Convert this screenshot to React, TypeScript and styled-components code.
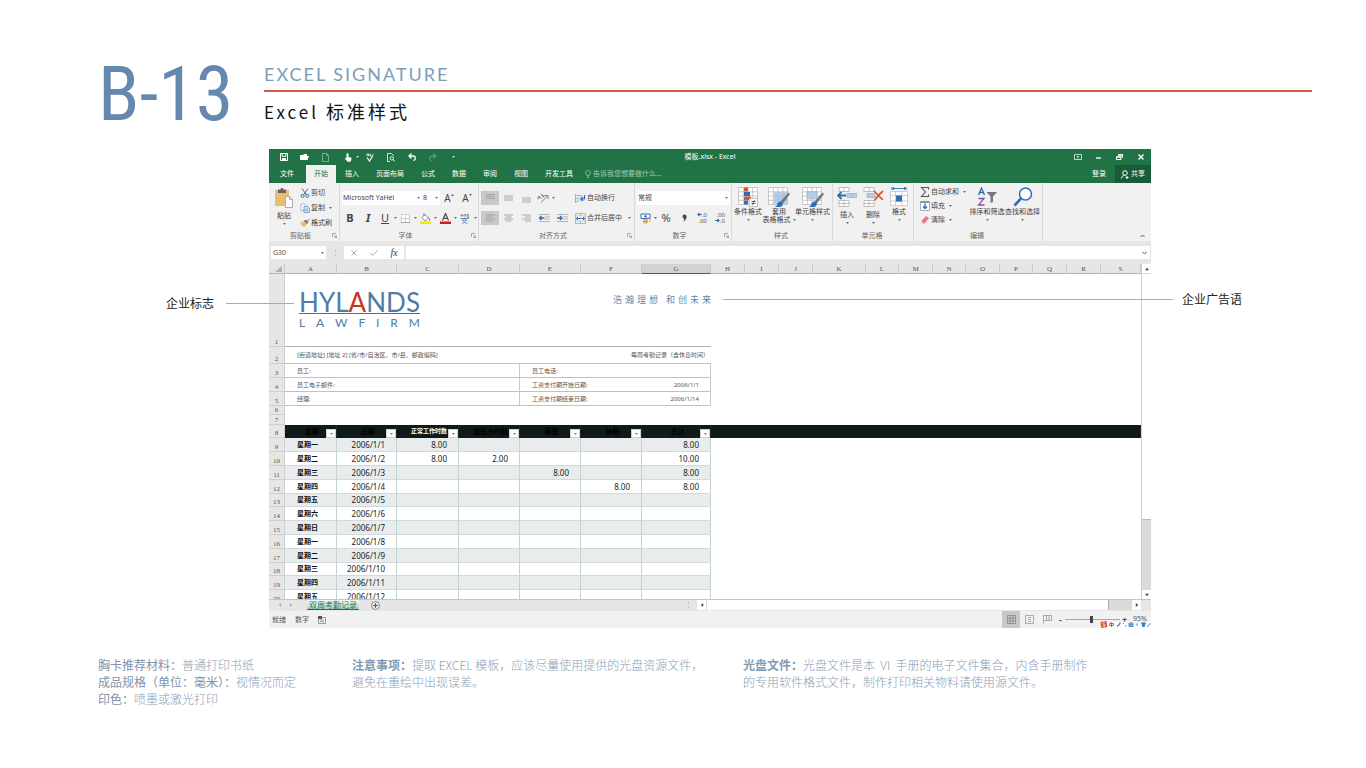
import React from "react";
import styled, { createGlobalStyle, css } from "styled-components";

const sans = `"Noto Sans", "Noto Sans CJK SC", sans-serif`;
const cjk = `"Noto Sans CJK SC", "Noto Sans", sans-serif`;
const blue = "#6488ae";
const green = "#217346";

const Global = createGlobalStyle`
  *, *::before, *::after { box-sizing: border-box; }
  body { margin: 0; background: #fff; font-family: ${sans}; }
  button, input, select { font: inherit; color: inherit; border: 0; padding: 0; margin: 0; background: none; border-radius: 0; }
  svg { display: block; flex: none; }
`;

/* ---------- page ---------- */
const Page = styled.main`
  min-width: 1240px;
  padding: 57px 54px 60px 98px;
`;
const Header = styled.header`
  display: grid;
  grid-template-columns: 166px 1fr;
  height: 92px;
`;
const Code = styled.div`
  font: 400 76px/74px "Roboto Condensed", "Roboto", sans-serif;
  color: ${blue};
  white-space: nowrap;
`;
const English = styled.p`
  margin: 0;
  height: 33px;
  font: 400 18px/34px "Lato", sans-serif;
  letter-spacing: 2px;
  color: #7d9cbd;
  white-space: nowrap;
`;
const Title = styled.h1`
  margin: 0;
  border-top: 2px solid #cf5b42;
  font: 400 17px/38px ${cjk};
  letter-spacing: 3px;
  color: #111;
  & > span { font-size: 18px; }
`;
const Figure = styled.section`
  position: relative;
  margin: 0 161px 0 171px;
`;
const Callout = styled.div<{ $side: "left" | "right" }>`
  position: absolute;
  display: flex;
  align-items: center;
  font: 400 12px/16px ${cjk};
  color: #222;
  white-space: nowrap;
  pointer-events: none;
  ${(p) =>
    p.$side === "left"
      ? css`left: -103px; top: 146px; gap: 12px; width: 128px;`
      : css`left: 454px; right: -91px; top: 142px; gap: 9px;`}
`;
const Leader = styled.span`
  flex: 1;
  height: 1px;
  background: #d3a070;
`;
const Notes = styled.footer`
  display: grid;
  grid-template-columns: 254px 391px 1fr;
  margin-top: 28px;
  font: 300 12px/17px ${cjk};
  color: #8b9eb6;
  white-space: nowrap;
`;
const Note = styled.p`
  margin: 0;
`;
const Label = styled.span`
  font-weight: 400;
  color: #7e93ad;
`;
const Strong = styled.strong`
  font-weight: 700;
  color: #8499b2;
`;

/* ---------- application window ---------- */
const Window = styled.div`
  background: #e6e6e6;
  color: #444;
  font: 400 7px/10px ${sans};
  overflow: hidden;
`;
const TitleBar = styled.div`
  display: grid;
  grid-template-columns: 1fr auto 1fr;
  align-items: center;
  height: 16px;
  background: ${green};
  color: #fff;
`;
const Quick = styled.div<{ $end?: boolean }>`
  display: flex;
  padding-left: 4px;
  justify-content: ${(p) => (p.$end ? "flex-end" : "flex-start")};
`;
const BarButton = styled.button<{ $caret?: boolean; $dim?: boolean }>`
  display: flex;
  align-items: center;
  justify-content: ${(p) => (p.$caret ? "flex-end" : "center")};
  gap: 4px;
  width: ${(p) => (p.$caret ? 23 : 21)}px;
  height: 14px;
  opacity: ${(p) => (p.$dim ? 0.4 : 1)};
`;
const TabBar = styled.nav`
  display: flex;
  align-items: stretch;
  gap: 1px;
  height: 18px;
  padding-left: 3px;
  background: ${green};
  color: #fff;
`;
const Tab = styled.button<{ $active?: boolean; $file?: boolean }>`
  padding: 0 8px;
  margin-right: ${(p) => (p.$file ? 3 : 0)}px;
  white-space: nowrap;
  ${(p) => p.$active && css`background: #f1f1f1; color: ${green};`}
`;
const Tell = styled.button`
  display: flex;
  align-items: center;
  gap: 2px;
  padding-left: 3px;
  color: #a6cab5;
  white-space: nowrap;
`;
const Spring = styled.span`
  flex: 1;
`;
const Share = styled.button`
  display: flex;
  align-items: center;
  justify-content: center;
  gap: 2px;
  width: 36px;
  background: #185c37;
`;
const Ribbon = styled.div`
  display: flex;
  height: 58px;
  background: #f1f1f1;
`;
const Group = styled.section<{ $w?: number }>`
  display: flex;
  flex-direction: column;
  ${(p) => (p.$w ? css`width: ${p.$w}px; border-right: 1px solid #dadada;` : css`flex: 1;`)}
`;
const GroupBody = styled.div<{ $pad?: number }>`
  display: flex;
  flex: 1;
  padding-left: ${(p) => p.$pad ?? 0}px;
`;
const GroupFoot = styled.div`
  display: flex;
  align-items: center;
  height: 11px;
  padding-right: 2px;
  color: #666;
  text-align: center;
  & > span { flex: 1; }
`;
const BigButton = styled.button<{ $w: number; $low?: boolean }>`
  display: flex;
  flex-direction: column;
  align-items: center;
  width: ${(p) => p.$w}px;
  padding-top: 4px;
  line-height: 8px;
  white-space: nowrap;
  & > svg:first-child { margin-bottom: ${(p) => (p.$low ? 4 : 1)}px; }
  & > svg:last-child { margin-top: 3px; }
`;
const Pair = styled.span`
  display: flex;
  align-items: center;
  gap: 2px;
`;
const Stack = styled.div<{ $w?: number; $pad: number }>`
  display: flex;
  flex-direction: column;
  width: ${(p) => (p.$w ? p.$w + "px" : "auto")};
  padding: ${(p) => p.$pad}px 0 0 6px;
`;
const SmallButton = styled.button<{ $h: number }>`
  display: flex;
  align-items: center;
  gap: 1px;
  height: ${(p) => p.$h}px;
  white-space: nowrap;
  & > svg + svg, & > span + svg { margin-left: 3px; }
`;
const Rows = styled.div`
  display: flex;
  flex-direction: column;
  gap: 6px;
  flex: 1;
  padding-top: 8px;
`;
const Row = styled.div<{ $pad?: number }>`
  display: flex;
  align-items: center;
  height: 14px;
  padding-left: ${(p) => p.$pad ?? 0}px;
`;
const Tool = styled.button<{ $on?: boolean }>`
  display: flex;
  align-items: center;
  justify-content: center;
  width: 18px;
  height: 14px;
  background: ${(p) => (p.$on ? "#c8c8c8" : "none")};
`;
const DropTool = styled.button`
  display: grid;
  grid-template-columns: 16px 4px;
  place-items: center;
  width: 20px;
  height: 14px;
`;
const TextTool = styled.button<{ $gap: number }>`
  display: flex;
  align-items: center;
  gap: 1px;
  margin-left: ${(p) => p.$gap}px;
  white-space: nowrap;
  & > span + svg { margin-left: 5px; }
`;
const Letter = styled.span<{ $style: "b" | "i" | "u" | "a" | "p" }>`
  font: 700 11px/12px ${sans};
  ${(p) => p.$style === "i" && css`font-style: italic;`}
  ${(p) => p.$style === "u" && css`font-weight: 400; text-decoration: underline;`}
  ${(p) => p.$style === "a" && css`font-weight: 400; font-size: 10px;`}
  ${(p) => p.$style === "p" && css`font-weight: 400; font-size: 11px;`}
`;
const Picker = styled.label<{ $w: number }>`
  display: flex;
  align-items: center;
  width: ${(p) => p.$w}px;
  height: 14px;
  padding-right: 2px;
  background: #fff;
  font-size: 7px;
`;
const Select = styled.select`
  flex: 1;
  min-width: 0;
  height: 12px;
  padding-left: 1px;
  appearance: none;
  line-height: 12px;
`;
const FormulaBar = styled.div`
  display: flex;
  align-items: center;
  height: 23px;
  padding: 0 1px 0 2px;
`;
const NameBox = styled.label`
  display: flex;
  align-items: center;
  width: 55px;
  height: 13px;
  padding: 0 2px;
  background: #fff;
`;
const Field = styled.input`
  flex: 1;
  min-width: 0;
  height: 13px;
  font-size: 7px;
  color: #555;
`;
const Dots = styled.span`
  width: 18px;
  text-align: center;
  color: #999;
`;
const FormulaTools = styled.div`
  display: flex;
  width: 60px;
  height: 13px;
  margin-right: 2px;
  background: #fff;
`;
const FormulaTool = styled.button`
  display: grid;
  place-items: center;
  width: 20px;
`;
const Fx = styled.span`
  font: italic 400 10px/12px "Liberation Serif", serif;
`;
const FormulaField = styled.label`
  display: flex;
  align-items: center;
  flex: 1;
  height: 13px;
  padding-right: 3px;
  background: #fff;
`;

/* ---------- worksheet ---------- */
const SheetArea = styled.div`
  display: flex;
  height: 335px;
`;
const Sheet = styled.div`
  flex: 1;
  min-width: 0;
  overflow: hidden;
  background: #fff;
`;
const Grid = styled.table`
  width: 100%;
  table-layout: fixed;
  border-collapse: separate;
  border-spacing: 0;
  td, th { padding: 0; font-weight: 400; line-height: 8px; white-space: nowrap; }
`;
const ColHead = styled.th<{ $on?: boolean }>`
  height: 10px;
  font-family: "Liberation Serif", serif;
  color: ${(p) => (p.$on ? green : "#555")};
  background: ${(p) => (p.$on ? "#d2d2d2" : "#e6e6e6")};
  border-right: 1px solid #c9c9c9;
  border-bottom: 1px solid ${(p) => (p.$on ? green : "#b5b5b5")};
`;
const RowHead = styled.th`
  vertical-align: bottom;
  font-family: "Liberation Serif", serif;
  color: #555;
  background: #e6e6e6;
  border-right: 1px solid #cfcfcf;
  border-bottom: 1px solid #cfcfcf;
  overflow: hidden;
`;
const SheetRow = styled.tr<{ $h: number }>`
  height: ${(p) => p.$h}px;
`;
const Info = styled.td<{ $right?: boolean; $pad?: number; $edge?: boolean }>`
  && {
    font-size: 6px;
    color: #5d524b;
    text-align: ${(p) => (p.$right ? "right" : "left")};
    padding: 0 ${(p) => (p.$right ? p.$pad ?? 11 : 0)}px 0 ${(p) => (p.$right ? 0 : p.$pad ?? 12)}px;
    border-bottom: 1px solid #c6c0bc;
    border-right: ${(p) => (p.$edge ? "1px solid #cbc8c5" : 0)};
  }
`;
const Banner = styled.td`
  && { vertical-align: top; border-bottom: 1px solid #b9aea8; }
`;
const BannerInner = styled.div`
  display: flex;
  justify-content: space-between;
  padding: 16px 0 0 14px;
`;
const Brand = styled.div`
  width: 121px;
  color: #4f7ca6;
`;
const BrandName = styled.div`
  display: flex;
  justify-content: space-between;
  height: 24px;
  border-bottom: 1px solid #c8452c;
  font: 400 26px/24px "Lato", sans-serif;
`;
const BrandAccent = styled.span`
  color: #c8361c;
`;
const BrandSub = styled.div`
  display: flex;
  justify-content: space-between;
  padding-top: 3px;
  font: 400 12px/12px "Lato", sans-serif;
`;
const Slogan = styled.p`
  margin: 0;
  width: 98px;
  padding-top: 4px;
  font: 400 9px/12px ${cjk};
  letter-spacing: 3px;
  color: #6488ae;
`;
const DarkHead = styled.th<{ $light?: boolean }>`
  && {
    background: #0f1a1b;
    color: ${(p) => (p.$light ? "#fff" : "#000")};
    font-weight: 700;
    font-size: ${(p) => (p.$light ? 6 : 7)}px;
    border-right: 1px solid #1d2b2c;
  }
`;
const HeadInner = styled.div`
  display: flex;
  align-items: flex-end;
  justify-content: space-between;
  height: 13px;
  padding-left: 13px;
  & > span { flex: 1; line-height: 13px; text-align: center; }
`;
const Filter = styled.button`
  display: grid;
  place-items: center;
  width: 10px;
  height: 9px;
  color: #555;
  background: #fff;
  border: 1px solid #d0d0d0;
`;
const Cell = styled.td<{ $band?: boolean }>`
  && {
    padding-right: 11px;
    font-size: 8px;
    line-height: 10px;
    text-align: right;
    color: #222;
    background: ${(p) => (p.$band ? "#e8eced" : "#fff")};
    border-right: 1px solid #c3d3d3;
    border-bottom: 1px solid #cfdbdb;
  }
`;
const Day = styled(Cell)`
  && {
    padding-left: 12px;
    font-size: 7px;
    font-weight: 700;
    text-align: left;
    color: #111;
  }
`;
const VScroll = styled.div`
  display: flex;
  flex-direction: column;
  width: 10px;
  background: #dadada;
  border-left: 1px solid #d0d0d0;
`;
const ScrollButton = styled.button<{ $across?: boolean }>`
  display: grid;
  place-items: center;
  width: ${(p) => (p.$across ? "9px" : "100%")};
  height: ${(p) => (p.$across ? "10px" : "9px")};
  background: #fff;
`;
const VTrack = styled.div`
  flex: 1;
  padding-top: 1px;
`;
const VThumb = styled.div`
  height: 78%;
  background: #fff;
  border-bottom: 1px solid #bbb;
`;
const SheetTabs = styled.div`
  display: grid;
  grid-template-columns: 428px 1fr 10px;
  align-items: start;
  height: 12px;
  border-top: 1px solid #c6c6c6;
`;
const TabStrip = styled.div`
  display: flex;
  align-items: center;
  height: 10px;
`;
const NavButton = styled.button`
  display: grid;
  place-items: center;
  width: 11px;
`;
const SheetTab = styled.button`
  margin-left: 11px;
  width: 52px;
  height: 10px;
  font: 400 8px/9px ${cjk};
  color: #2c7d50;
  white-space: nowrap;
  background: linear-gradient(#f3f8f5, #b4d3c3);
  border-bottom: 1px solid ${green};
`;
const AddSheet = styled.button`
  margin: 0 auto 0 12px;
`;
const HScroll = styled.div`
  display: flex;
  gap: 1px;
  height: 10px;
  background: #dadada;
`;
const HThumb = styled.div`
  flex: 1;
  margin-right: 22px;
  background: #fff;
  border-right: 1px solid #aaa;
`;
const Status = styled.div`
  position: relative;
  display: flex;
  align-items: center;
  height: 17px;
  padding: 0 3px;
  background: #f1f1f1;
  color: #555;
`;
const StatusText = styled.span`
  margin-right: 9px;
`;
const ViewButton = styled.button<{ $on?: boolean }>`
  display: grid;
  place-items: center;
  width: 18px;
  height: 17px;
  background: ${(p) => (p.$on ? "#c8c8c8" : "none")};
`;
const ZoomButton = styled.button`
  width: 9px;
  font: 700 9px/10px ${sans};
`;
const ZoomRange = styled.input`
  width: 55px;
  height: 8px;
  appearance: none;
  background: linear-gradient(#a5a5a5, #a5a5a5) center / 100% 1px no-repeat;
  &::-webkit-slider-thumb { appearance: none; width: 3px; height: 7px; background: #444; }
`;
const ZoomValue = styled.span`
  margin-left: 4px;
  padding-bottom: 2px;
  width: 15px;
  line-height: 8px;
`;
const ImeBar = styled.div`
  position: absolute;
  right: 0;
  bottom: 0;
`;

/* ---------- drawings ---------- */
type IconProps = { w: number; h: number; children: React.ReactNode; vb?: string };
const Icon = ({ w, h, vb, children }: IconProps) => (
  <svg width={w} height={h} viewBox={vb ?? `0 0 ${w} ${h}`} fill="none" stroke="currentColor" strokeWidth="1" aria-hidden="true">
    {children}
  </svg>
);
const Caret = () => (
  <Icon w={3} h={2} vb="0 0 4 2">
    <path d="M0 0h4L2 2z" fill="currentColor" stroke="none" />
  </Icon>
);
const arrowPaths = { up: "M0 4 2.500 1 5 4z", down: "M0 1 2.500 4 5 1z", left: "M4 0 1 2.500 4 5z", right: "M1 0 4 2.500 1 5z" };
const Arrow = ({ d }: { d: keyof typeof arrowPaths }) => (
  <Icon w={4} h={4} vb="0 0 5 5">
    <path d={arrowPaths[d]} fill="currentColor" stroke="none" />
  </Icon>
);
const Launcher = () => (
  <Icon w={5} h={5}>
    <path d="M.5 4V.5H4M2 2l2.500 2.500M4.500 2.500v2h-2" stroke="#888" strokeWidth=".7" />
  </Icon>
);
const grid = "M.5.5h19v17H.5zM.5 4.800h19M.5 9h19M.5 13.300h19M5.300.5v17M10 .5v17M14.800.5v17";
const Brush = () => (
  <g stroke="none">
    <path d="M20.500 5.500 22 7l-7.500 10-2.500-2z" fill="#777" />
    <path d="M12.500 14.500c-2 0-3 1.500-3.500 3.500-.5 1.300-1.500 1.700-2.500 2 3 1.200 8 .7 8.300-3z" fill="#2f6eb5" />
  </g>
);
const PasteIcon = () => (
  <Icon w={20} h={21}>
    <path d="M1 3h14v16H1z" fill="#e8bd72" stroke="none" />
    <path d="M4 2.500h2.500C6.500.5 9.500.5 9.500 2.500H12V6H4z" fill="#666" stroke="none" />
    <path d="M11.500 9.500h4l3 3v8h-7z" fill="#fff" stroke="#aaa" />
    <path d="M15.500 9.500v3h3" stroke="#aaa" />
  </Icon>
);
const CutIcon = () => (
  <Icon w={10} h={10}>
    <path d="M2 .5 6.500 7M8 .5 3.500 7" stroke="#666" />
    <circle cx="2.500" cy="7.800" r="1.500" stroke="#2f6eb5" />
    <circle cx="7.300" cy="7.800" r="1.500" stroke="#2f6eb5" />
  </Icon>
);
const CopyIcon = () => (
  <Icon w={10} h={10}>
    <path d="M1 1h3.500L6 2.500v5H1z" fill="#fff" stroke="#8aa9ca" strokeWidth=".8" />
    <path d="M4 3.500h3.500L9.300 5v4.500H4z" fill="#dbe8f5" stroke="#5c8ec2" strokeWidth=".8" />
    <path d="M5 6h3M5 7.500h3" stroke="#5c8ec2" strokeWidth=".6" />
  </Icon>
);
const FormatIcon = () => (
  <Icon w={10} h={10}>
    <path d="M0 4.500 4 3l3 3-3 3.500C2.500 8 1 6.500 0 4.500z" fill="#e8bd72" stroke="none" />
    <path d="m4.500 3 1-1 2.500 2.500-1 1zM7 3l2.500-2" fill="#666" stroke="#666" strokeWidth=".8" />
  </Icon>
);
const LinesIcon = ({ y, short }: { y: number[]; short?: "l" | "r" | "c" }) => (
  <Icon w={9} h={10}>
    {y.map((v, i) => {
      const cut = short && i % 2 ? 3 : 0;
      const a = short === "r" ? cut : short === "c" ? cut / 2 : 0;
      const b = short === "l" ? cut : short === "c" ? cut / 2 : 0;
      return <path key={v} d={`M${a} ${v}H${9 - b}`} stroke="#999" strokeWidth=".8" />;
    })}
  </Icon>
);
const IndentIcon = ({ flip }: { flip?: boolean }) => (
  <Icon w={11} h={8}>
    <path d="M0 .5h11M6 2.800h5M6 5h5M0 7.500h11" stroke="#999" strokeWidth=".7" />
    <path d={flip ? "M0 4h5M3 2l2 2-2 2" : "M5.500 4H.5M2.500 2l-2 2 2 2"} stroke="#2f6eb5" strokeWidth="1.300" />
  </Icon>
);
const RotateIcon = () => (
  <Icon w={12} h={10}>
    <path d="M4 9.500 10.500 3M7.500 2.500h3.500V6" stroke="#666" strokeWidth=".8" />
    <path d="M1 4c1-1.500 2.500 0 1.300 1.300S.3 5 1 4M2.300 3.300 4.500 5.500M3.800.8l2.500 3.500c1.500-1 .2-3-1.200-1.700" stroke="#666" strokeWidth=".8" />
  </Icon>
);
const WrapIcon = () => (
  <Icon w={11} h={9}>
    <path d="M0 1.500h7M0 4.500h5M0 7.500h4M.5 0v9" stroke="#999" strokeWidth=".7" />
    <path d="M2 2.500h5v5H2z" fill="#c9dcef" stroke="none" />
    <path d="M9.500 1v4H6M8 3 6 5l2 2" stroke="#2f6eb5" strokeWidth="1.200" />
  </Icon>
);
const MergeIcon = () => (
  <Icon w={11} h={11}>
    <path d="M.5.5h10v10H.5zM5.500.5v2.500M5.500 8v2.500" stroke="#aaa" strokeWidth=".8" />
    <path d="M1 3h9v5H1z" fill="#fff" stroke="#aaa" strokeWidth=".6" />
    <path d="M1.500 5.500h8M3 4 1.500 5.500 3 7M8 4l1.500 1.500L8 7" stroke="#2f6eb5" />
  </Icon>
);
const BorderIcon = () => (
  <Icon w={9} h={9}>
    <path d="M.5.5h8v8h-8zM4.500.5v8M.5 4.500h8" stroke="#c4c4c4" strokeWidth=".8" fill="#fff" />
    <path d="M0 8.500h9" stroke="#aaa" />
  </Icon>
);
const FillIcon = () => (
  <Icon w={11} h={11}>
    <path d="m2 4.500 3-3 3.500 3.500L5 8z" fill="#fff" stroke="#777" strokeWidth=".8" />
    <path d="M4 3V.5M8.500 4.500c1.500 1 1.500 2.500 1 3.200" stroke="#2f6eb5" strokeWidth=".9" />
    <path d="M0 8.500h11V11H0z" fill="#f7e500" stroke="none" />
  </Icon>
);
const FontColorIcon = () => (
  <Icon w={11} h={11}>
    <path d="M2.500 7.500 5.500.5l3 7M3.500 5.300h4" stroke="#555" strokeWidth="1.300" />
    <path d="M0 8.500h11V11H0z" fill="#e3141b" stroke="none" />
  </Icon>
);
const PhoneticIcon = () => (
  <Icon w={10} h={11}>
    <path d="M1 1v2h1.500V1.500M4 1.500v2M4 1.500h1.500v2M7 3.500V1.500h1.500V4.500H7" stroke="#666" strokeWidth=".7" />
    <path d="M0 5.500h9M4.500 4.500v1M2 7h5M6.500 7c-1 2-2.500 3-4.500 3.500M2.500 7C3.500 9 5 10 7.500 10.500" stroke="#4d82bd" strokeWidth=".8" />
  </Icon>
);
const MoneyIcon = () => (
  <Icon w={11} h={11}>
    <path d="M1 1h9v4.500H1z" fill="#fff" stroke="#2f6eb5" />
    <circle cx="5.500" cy="3.200" r="1.200" fill="#2f6eb5" stroke="none" />
    <path d="M3 7c0-1.500 5-1.500 5 0v2.500c0 1.500-5 1.500-5 0z" fill="#efb46a" stroke="none" />
    <path d="M3 8c1 .8 4 .8 5 0M6 5.500c1-.8 4-.8 4 .5v3" stroke="#c98a3d" strokeWidth=".7" />
  </Icon>
);
const DecimalTexts = styled.span`
  display: grid;
  font: 400 6px/6px ${sans};
  text-align: right;
  color: #555;
`;
const CondIcon = () => (
  <Icon w={20} h={20} vb="0 0 20 20">
    <path d={grid} fill="#fff" stroke="#b5b5b5" strokeWidth=".7" />
    <path d="M6 .5h4v4H6zM6 9.500h7v3.500H6z" fill="#d8532f" stroke="none" />
    <path d="M6 5h6v4H6zM6 13.500h4v4H6z" fill="#2f6eb5" stroke="none" />
    <path d="M11.500 11.500h8v8h-8z" fill="#fff" stroke="#aaa" strokeWidth=".7" />
    <path d="M13.500 14.500h4M13.500 16.500h4M17 13l-3 5" stroke="#444" strokeWidth=".8" />
  </Icon>
);
const TableIcon = () => (
  <Icon w={22} h={20} vb="0 0 22 20">
    <path d={grid} fill="#fff" stroke="#b5b5b5" strokeWidth=".7" />
    <path d="M5.500 5h14v12.500h-14z" fill="#b7cde4" stroke="none" />
    <path d="M5.500 9h14M5.500 13.300h14M10 5v12.500M14.800 5v12.500" stroke="#9fb9d5" strokeWidth=".5" />
    <Brush />
  </Icon>
);
const StyleIcon = () => (
  <Icon w={22} h={20} vb="0 0 22 20">
    <path d={grid} fill="#fff" stroke="#b5b5b5" strokeWidth=".7" />
    <path d="M5 4.800h10v7H5z" fill="#b7cde4" stroke="#8fb0d3" strokeWidth=".7" />
    <Brush />
  </Icon>
);
const InsertIcon = () => (
  <Icon w={20} h={20}>
    <path d="M2 .5h10v4H2zM7 .5v4M2 13.500h10v6H2zM7 13.500v6M2 16.500h10" stroke="#b0b0b0" strokeWidth=".8" fill="#fff" />
    <path d="M10 6.500h10v4H10zM15 6.500v4" fill="#b7cde4" stroke="#8fb0d3" strokeWidth=".7" />
    <path d="M9 8.500H1M4.500 5 1 8.500 4.500 12" stroke="#2f6eb5" strokeWidth="1.800" />
  </Icon>
);
const DeleteIcon = () => (
  <Icon w={21} h={20}>
    <path d="M1 .5h10v4H1zM6 .5v4M1 13.500h10v6H1zM6 13.500v6M1 16.500h10" stroke="#b0b0b0" strokeWidth=".8" fill="#fff" />
    <path d="M4 6.500h8v4H4z" fill="#b7cde4" stroke="#8fb0d3" strokeWidth=".7" />
    <path d="m11 4 9 9M20 4c-3 2.500-6 5.500-8.500 9.500" stroke="#d8532f" strokeWidth="1.700" />
  </Icon>
);
const FormatCellsIcon = () => (
  <Icon w={20} h={20}>
    <path d="M3 1.500h14M3 0v3M17 0v3M5 0 3.500 1.500 5 3M15 0l1.500 1.500L15 3" stroke="#2f6eb5" strokeWidth=".9" />
    <path d="M1.500 4.500h17v14h-17zM6.500 4.500v14M13 4.500v14M1.500 8.500h17M1.500 14h17" stroke="#bbb" strokeWidth=".7" fill="#fff" />
    <path d="M7 8.500h6v6H7z" fill="#2f6eb5" stroke="none" />
  </Icon>
);
const SigmaIcon = () => (
  <Icon w={10} h={10}>
    <path d="M8.500 2.500v-2h-7L5.500 5l-4 4.500h7v-2" stroke="#555" strokeWidth="1.100" />
  </Icon>
);
const FillDownIcon = () => (
  <Icon w={10} h={10}>
    <path d="M.5 1h9v8.500h-9z" fill="#fff" stroke="#999" strokeWidth=".8" />
    <path d="M.5 1h9" stroke="#555" />
    <path d="M5 2.500v5M3 5.500l2 2 2-2" stroke="#2f6eb5" strokeWidth="1.300" />
  </Icon>
);
const EraserIcon = () => (
  <Icon w={10} h={10}>
    <path d="m1.500 6 4.500-5 3 2-4.500 5.500H3z" fill="#e8788a" stroke="none" />
    <path d="m1.500 6 3 2.500L3.500 9.500 1 8z" fill="#f6c3cb" stroke="none" />
  </Icon>
);
const SortIcon = () => (
  <Icon w={20} h={20}>
    <path d="m1.500 8 3-7 3 7M2.500 5.500h4" stroke="#2f6eb5" strokeWidth="1.300" />
    <path d="M1.500 11.500h5.500L1.500 18h6" stroke="#8b4da8" strokeWidth="1.300" />
    <path d="M9.500 5H20l-4 4.500V15l-2.500 1V9.500z" fill="#777" stroke="none" />
  </Icon>
);
const FindIcon = () => (
  <Icon w={20} h={20}>
    <circle cx="12.500" cy="7" r="6" fill="#fff" stroke="#2f6eb5" strokeWidth="1.500" />
    <path d="m8 11.500-6.500 7" stroke="#2f6eb5" strokeWidth="2.600" />
  </Icon>
);
const Chevron = ({ up }: { up?: boolean }) => (
  <Icon w={5} h={4}>
    <path d={up ? "m.5 3 2-2 2 2" : "m.5 1 2 2 2-2"} stroke="#555" />
  </Icon>
);
const InlineSvg = styled.svg`
  && { display: inline-block; }
`;
const DigitArrow = ({ left }: { left?: boolean }) => (
  <InlineSvg width="5" height="5" viewBox="0 0 5 5" aria-hidden="true">
    <path d={left ? "M5 2.500H1M2.500 1 1 2.500 2.500 4" : "M0 2.500h4M2.500 1 4 2.500 2.500 4"} fill="none" stroke="#2f6eb5" strokeWidth="1.200" />
  </InlineSvg>
);

/* ---------- data ---------- */
const tabs = ["插入", "页面布局", "公式", "数据", "审阅", "视图", "开发工具"];
const columns: [string, number?][] = [
  ["A", 52], ["B", 60], ["C", 62], ["D", 61], ["E", 61], ["F", 61], ["G", 69], ["H", 34], ["I", 34], ["J", 34],
  ["K", 53], ["L", 33], ["M", 34], ["N", 33], ["O", 34], ["P", 33], ["Q", 34], ["R", 34], ["S"],
];
const heads = ["星期", "日期", "正常工作时数", "加班小时数", "病假", "休假", "总计"];
const days: string[][] = [
  ["星期一", "2006/1/1", "8.00", "", "", "", "8.00"],
  ["星期二", "2006/1/2", "8.00", "2.00", "", "", "10.00"],
  ["星期三", "2006/1/3", "", "", "8.00", "", "8.00"],
  ["星期四", "2006/1/4", "", "", "", "8.00", "8.00"],
  ["星期五", "2006/1/5"],
  ["星期六", "2006/1/6"],
  ["星期日", "2006/1/7"],
  ["星期一", "2006/1/8"],
  ["星期二", "2006/1/9"],
  ["星期三", "2006/1/10"],
  ["星期四", "2006/1/11"],
  ["星期五", "2006/1/12"],
];

/* ---------- parts ---------- */
const TopBars = () => (
  <>
    <TitleBar>
      <Quick>
        <BarButton aria-label="保存">
          <Icon w={8} h={8}><path d="M1 .5h6.500v7h-7V.5zM2.200.5v2.800h3.600V.5" /><path d="M2 5h4v3H2z" fill="currentColor" stroke="none" /></Icon>
        </BarButton>
        <BarButton aria-label="打开">
          <Icon w={9} h={8}><path d="M0 7V2h3l1-1h3v2h2L7.500 7z" fill="currentColor" stroke="none" /></Icon>
        </BarButton>
        <BarButton aria-label="新建" $dim>
          <Icon w={7} h={9}><path d="M.5.5h4l2 2v6h-6zM4.500.5v2h2" /></Icon>
        </BarButton>
        <BarButton aria-label="触摸模式" $caret>
          <Icon w={8} h={9}><path d="M2.500 1c0-1 2-1 2 0v3l3 .8c0 2-.6 3-1.200 4H3.500L.8 5.500l1-.8.7.6z" fill="currentColor" stroke="none" /></Icon>
          <Caret />
        </BarButton>
        <BarButton aria-label="拼写检查">
          <Icon w={8} h={9}><path d="M1 4.500 3.500 8 7 2.500" strokeWidth="1.200" /><path d="M1 3V1h1.500v2M4 .5V3h1V1.500M7.500 1H6.500" strokeWidth=".8" /></Icon>
        </BarButton>
        <BarButton aria-label="打印预览">
          <Icon w={8} h={9}><path d="M6.500 3V2.500l-2-2h-4v8H3" strokeWidth=".8" /><circle cx="4.800" cy="5.300" r="1.700" strokeWidth=".8" /><path d="m6 6.500 1.700 2" /></Icon>
        </BarButton>
        <BarButton aria-label="撤消">
          <Icon w={8} h={8}><path d="M1 3h4c3 0 3 4 .5 4.500M3.500.5 1 3l2.500 2.500" strokeWidth="1.300" /></Icon>
        </BarButton>
        <BarButton aria-label="恢复" $dim>
          <Icon w={8} h={8}><path d="M7 3H3C0 3 0 7 2.500 7.500M4.500.5 7 3 4.500 5.500" /></Icon>
        </BarButton>
        <BarButton aria-label="自定义"><Caret /></BarButton>
      </Quick>
      <span>模板.xlsx - Excel</span>
      <Quick $end>
        <BarButton aria-label="功能区显示选项">
          <Icon w={8} h={6}><path d="M.5.5h7v5h-7zM4 4.500V2M3 3l1-1 1 1" strokeWidth=".7" /></Icon>
        </BarButton>
        <BarButton aria-label="最小化"><Icon w={5} h={4}><path d="M0 3h5" strokeWidth="1.300" /></Icon></BarButton>
        <BarButton aria-label="还原">
          <Icon w={7} h={6}><path d="M2 1h4.500v2.500M.5 3h4.500v2.500H.5z" /><path d="M2 .8h5M.5 2.800h5" strokeWidth="1.300" /></Icon>
        </BarButton>
        <BarButton aria-label="关闭"><Icon w={6} h={6}><path d="m.5.5 5 5M5.500.5l-5 5" strokeWidth="1.400" /></Icon></BarButton>
      </Quick>
    </TitleBar>
    <TabBar>
      <Tab $file>文件</Tab>
      <Tab $active>开始</Tab>
      {tabs.map((t) => <Tab key={t}>{t}</Tab>)}
      <Tell>
        <Icon w={6} h={8}><path d="M2 6V5C0 3.500.5.5 3 .5s3 3 1 4.500v1zM2 7.500h2" strokeWidth=".8" /></Icon>
        告诉我您想要做什么...
      </Tell>
      <Spring />
      <Tab>登录</Tab>
      <Share>
        <Icon w={8} h={9}><circle cx="4" cy="3" r="2.300" /><path d="M.5 8.500C.5 6.500 2 5.500 3.500 5.500M4.500 7.500h3M6 6v3" /></Icon>
        共享
      </Share>
    </TabBar>
  </>
);

const Collapse = styled.button`
  align-self: flex-end;
  height: 11px;
  padding-right: 6px;
`;
const RibbonBar = () => (
  <Ribbon>
    <Group $w={71}>
      <GroupBody $pad={5}>
        <BigButton $w={20} $low><PasteIcon />粘贴<Caret /></BigButton>
        <Stack $pad={2}>
          <SmallButton $h={15}><CutIcon /><span>剪切</span></SmallButton>
          <SmallButton $h={15}><CopyIcon /><span>复制</span><Caret /></SmallButton>
          <SmallButton $h={15}><FormatIcon /><span>格式刷</span></SmallButton>
        </Stack>
      </GroupBody>
      <GroupFoot><span>剪贴板</span><Launcher /></GroupFoot>
    </Group>
    <Group $w={139}>
      <GroupBody>
        <Rows>
          <Row $pad={2}>
            <Picker $w={80}>
              <Select aria-label="字体"><option>Microsoft YaHei</option></Select><Caret />
            </Picker>
            <Picker $w={18}>
              <Select aria-label="字号"><option>8</option></Select><Caret />
            </Picker>
            <Tool aria-label="增大字号"><Letter $style="a">A</Letter><Icon w={3} h={8}><path d="M0 2h3L1.500 0z" fill="#2f6eb5" stroke="none" /></Icon></Tool>
            <Tool aria-label="减小字号"><Letter $style="a">A</Letter><Icon w={3} h={8}><path d="M0 0h3L1.500 2z" fill="#2f6eb5" stroke="none" /></Icon></Tool>
          </Row>
          <Row $pad={1}>
            <Tool aria-label="加粗"><Letter $style="b">B</Letter></Tool>
            <Tool aria-label="倾斜"><Letter $style="i">I</Letter></Tool>
            <DropTool aria-label="下划线"><Letter $style="u">U</Letter><Caret /></DropTool>
            <DropTool aria-label="边框"><BorderIcon /><Caret /></DropTool>
            <DropTool aria-label="填充颜色"><FillIcon /><Caret /></DropTool>
            <DropTool aria-label="字体颜色"><FontColorIcon /><Caret /></DropTool>
            <DropTool aria-label="拼音"><PhoneticIcon /><Caret /></DropTool>
          </Row>
        </Rows>
      </GroupBody>
      <GroupFoot><span>字体</span><Launcher /></GroupFoot>
    </Group>
    <Group $w={156}>
      <GroupBody $pad={2}>
        <Rows>
          <Row>
            <Tool $on aria-label="顶端对齐"><LinesIcon y={[1.5, 3.5, 5.5]} /></Tool>
            <Tool aria-label="垂直居中"><LinesIcon y={[3, 5, 7]} /></Tool>
            <Tool aria-label="底端对齐"><LinesIcon y={[5, 7, 9]} /></Tool>
            <DropTool aria-label="方向"><RotateIcon /><Caret /></DropTool>
            <TextTool $gap={20}><WrapIcon /><span>自动换行</span></TextTool>
          </Row>
          <Row>
            <Tool $on aria-label="左对齐"><LinesIcon y={[2, 4, 6, 8]} short="l" /></Tool>
            <Tool aria-label="居中"><LinesIcon y={[2, 4, 6, 8]} short="c" /></Tool>
            <Tool aria-label="右对齐"><LinesIcon y={[2, 4, 6, 8]} short="r" /></Tool>
            <Tool aria-label="减少缩进"><IndentIcon /></Tool>
            <Tool aria-label="增加缩进"><IndentIcon flip /></Tool>
            <TextTool $gap={4}><MergeIcon /><span>合并后居中</span><Caret /></TextTool>
          </Row>
        </Rows>
      </GroupBody>
      <GroupFoot><span>对齐方式</span><Launcher /></GroupFoot>
    </Group>
    <Group $w={97}>
      <GroupBody $pad={2}>
        <Rows>
          <Row>
            <Picker $w={93}>
              <Select aria-label="数字格式"><option>常规</option></Select><Caret />
            </Picker>
          </Row>
          <Row>
            <DropTool aria-label="会计数字格式"><MoneyIcon /><Caret /></DropTool>
            <Tool aria-label="百分比"><Letter $style="p">%</Letter></Tool>
            <Tool aria-label="千位分隔"><Icon w={5} h={8}><path d="M1 1c2-1.500 4 0 3.500 2.500C4.200 5.500 3 7 1 7.500c1-1 1.500-2 1.300-3C.8 4.500 0 2.500 1 1z" fill="#444" stroke="none" /></Icon></Tool>
            <Tool aria-label="增加小数位"><DecimalTexts><span><DigitArrow left />.0</span><span>.00</span></DecimalTexts></Tool>
            <Tool aria-label="减少小数位"><DecimalTexts><span>.00</span><span><DigitArrow />.0</span></DecimalTexts></Tool>
          </Row>
        </Rows>
      </GroupBody>
      <GroupFoot><span>数字</span><Launcher /></GroupFoot>
    </Group>
    <Group $w={101}>
      <GroupBody $pad={2}>
        <BigButton $w={28}><CondIcon />条件格式<Caret /></BigButton>
        <BigButton $w={34}><TableIcon /><span>套用</span><Pair>表格格式 <Caret /></Pair></BigButton>
        <BigButton $w={33}><StyleIcon />单元格样式<Caret /></BigButton>
      </GroupBody>
      <GroupFoot><span>样式</span></GroupFoot>
    </Group>
    <Group $w={81}>
      <GroupBody $pad={1}>
        <BigButton $w={26} $low><InsertIcon />插入<Caret /></BigButton>
        <BigButton $w={26} $low><DeleteIcon />删除<Caret /></BigButton>
        <BigButton $w={26}><FormatCellsIcon />格式<Caret /></BigButton>
      </GroupBody>
      <GroupFoot><span>单元格</span></GroupFoot>
    </Group>
    <Group $w={129}>
      <GroupBody>
        <Stack $pad={2} $w={55}>
          <SmallButton $h={14}><SigmaIcon /><span>自动求和</span><Caret /></SmallButton>
          <SmallButton $h={14}><FillDownIcon /><span>填充</span><Caret /></SmallButton>
          <SmallButton $h={14}><EraserIcon /><span>清除</span><Caret /></SmallButton>
        </Stack>
        <BigButton $w={36}><SortIcon />排序和筛选<Caret /></BigButton>
        <BigButton $w={35}><FindIcon />查找和选择<Caret /></BigButton>
      </GroupBody>
      <GroupFoot><span>编辑</span></GroupFoot>
    </Group>
    <Group>
      <GroupBody />
      <Collapse aria-label="折叠功能区"><Chevron up /></Collapse>
    </Group>
  </Ribbon>
);

const Formula = () => (
  <FormulaBar>
    <NameBox><Field aria-label="名称框" defaultValue="G30" /><Caret /></NameBox>
    <Dots>⋮</Dots>
    <FormulaTools>
      <FormulaTool aria-label="取消"><Icon w={6} h={6}><path d="m.5.5 5 5M5.500.5l-5 5" stroke="#aaa" /></Icon></FormulaTool>
      <FormulaTool aria-label="输入"><Icon w={8} h={6}><path d="m.5 3 2 2.500L7.500.5" stroke="#aaa" /></Icon></FormulaTool>
      <FormulaTool aria-label="插入函数"><Fx>fx</Fx></FormulaTool>
    </FormulaTools>
    <FormulaField><Field aria-label="编辑栏" /><Chevron /></FormulaField>
  </FormulaBar>
);

const CornerMark = styled.svg`
  margin: 0 2px 0 auto;
`;
const Worksheet = () => (
  <Grid>
    <colgroup>
      <col width={16} />
      {columns.map(([c, w]) => <col key={c} width={w} />)}
    </colgroup>
    <thead>
      <tr>
        <ColHead aria-label="全选"><CornerMark width="7" height="6" viewBox="0 0 7 6"><path d="M7 0v6H0z" fill="#b0b0b0" /></CornerMark></ColHead>
        {columns.map(([c]) => <ColHead key={c} $on={c === "G"}>{c}</ColHead>)}
      </tr>
    </thead>
    <tbody>
      <SheetRow $h={73}>
        <RowHead>1</RowHead>
        <Banner colSpan={7}>
          <BannerInner>
            <Brand>
              <BrandName><span>H</span><span>Y</span><span>L</span><BrandAccent>A</BrandAccent><span>N</span><span>D</span><span>S</span></BrandName>
              <BrandSub>{"LAWFIRM".split("").map((l, i) => <span key={i}>{l}</span>)}</BrandSub>
            </Brand>
            <Slogan>浩瀚理想 和创未来</Slogan>
          </BannerInner>
        </Banner>
        <td colSpan={12} />
      </SheetRow>
      <SheetRow $h={17}>
        <RowHead>2</RowHead>
        <Info colSpan={4}>[街道地址] [地址 2] [省/市/自治区、市/县、邮政编码]</Info>
        <Info colSpan={3} $right $pad={2}>每周考勤记录（含休息时间）</Info>
      </SheetRow>
      {[["员工:", "员工电话:", ""], ["员工电子邮件:", "工资支付期开始日期:", "2006/1/1"], ["经理:", "工资支付期结束日期:", "2006/1/14"]].map(([a, b, c], i) => (
        <SheetRow key={a} $h={14}>
          <RowHead>{i + 3}</RowHead>
          <Info colSpan={4} $edge>{a}</Info>
          <Info colSpan={2}>{b}</Info>
          <Info $right $edge>{c}</Info>
        </SheetRow>
      ))}
      <SheetRow $h={9}><RowHead>6</RowHead></SheetRow>
      <SheetRow $h={10}><RowHead>7</RowHead></SheetRow>
      <SheetRow $h={13}>
        <RowHead>8</RowHead>
        {heads.map((h, i) => (
          <DarkHead key={h} $light={i === 2}>
            <HeadInner>
              <span>{h}</span>
              <Filter aria-label={`筛选${h}`}><Caret /></Filter>
            </HeadInner>
          </DarkHead>
        ))}
        <DarkHead colSpan={12} />
      </SheetRow>
      {days.map((d, i) => (
        <SheetRow key={d[1]} $h={i % 5 === 4 ? 13 : 14}>
          <RowHead>{i + 9}</RowHead>
          <Day $band={i % 2 === 0}>{d[0]}</Day>
          {heads.slice(1).map((h, j) => <Cell key={h} $band={i % 2 === 0}>{d[j + 1]}</Cell>)}
        </SheetRow>
      ))}
    </tbody>
  </Grid>
);

const StatusBar = () => (
  <Status>
    <StatusText>就绪</StatusText>
    <StatusText>数字</StatusText>
    <Icon w={8} h={8}><path d="M.5 1.500h7v6h-7zM2 4h4M2 5.700h4" stroke="#888" strokeWidth=".8" /><path d="M0 0h4v3H0z" fill="#555" stroke="none" /></Icon>
    <Spring />
    <ViewButton $on aria-label="普通"><Icon w={9} h={9}><path d="M.5.5h8v8h-8zM.5 3.200h8M.5 5.800h8M3.200.5v8M5.800.5v8" stroke="#888" strokeWidth=".8" /></Icon></ViewButton>
    <ViewButton aria-label="页面布局"><Icon w={9} h={9}><path d="M.5.5h8v8h-8zM3 2.500h3M3 4.500h3M3 6.500h3" stroke="#999" strokeWidth=".8" /></Icon></ViewButton>
    <ViewButton aria-label="分页预览"><Icon w={9} h={9}><path d="M.5 8.500v-8h8v5h-8M3.500.5v5M6 .5v5" stroke="#999" strokeWidth=".8" /></Icon></ViewButton>
    <ZoomButton aria-label="缩小">-</ZoomButton>
    <ZoomRange type="range" min={10} max={200} defaultValue={100} aria-label="显示比例" />
    <ZoomButton aria-label="放大">+</ZoomButton>
    <ZoomValue>95%</ZoomValue>
    <ImeBar>
      <Icon w={51} h={7}>
        <path d="M8 1h43v6H8z" fill="#fff" stroke="none" />
        <path d="m.5 1 6-1 .8 6-6 1z" fill="#e8481f" stroke="none" />
        <path d="M5.200 1.800c-1.500-.6-3 .2-2.500 1.200s3 .2 2.700 1.500-2.200.9-3 .4" stroke="#fff" strokeWidth=".8" />
        <g stroke="#2f7fd0" strokeWidth=".9">
          <path d="M9.500 2.500h4v2h-4zM11.500 1.200v5" />
          <path d="M20 1.500c.5 2-1 3.500-3 3.500 1.500-.5 2.500-1.500 3-3.500z" fill="#2f7fd0" />
          <path d="M23 2l1 1M26 4c0 1-.5 1.500-1 1.500" />
          <path d="M29 2h4v3.500h-4zM29 3.700h4M31 2v3.500" />
          <path d="M37 1.500v3M35.800 4h2.400" strokeOpacity=".6" />
          <path d="M42 2h3l-.5 3.500h-2zM40.800 2.200h5.400" fill="#2f7fd0" />
          <path d="m47 6 2-2.500c1 .3 1.500-.8 1-1.500" />
        </g>
      </Icon>
    </ImeBar>
  </Status>
);

const Faint = styled.span`
  opacity: 0.35;
`;
const Spacer = styled.span`
  width: 5px;
`;

export default function App() {
  return (
    <>
      <Global />
      <Page>
        <Header>
          <Code>B-13</Code>
          <div>
            <English>EXCEL SIGNATURE</English>
            <Title>Excel <span>标准样式</span></Title>
          </div>
        </Header>
        <Figure>
          <Window>
            <TopBars />
            <RibbonBar />
            <Formula />
            <SheetArea>
              <Sheet><Worksheet /></Sheet>
              <VScroll>
                <ScrollButton aria-label="向上"><Arrow d="up" /></ScrollButton>
                <VTrack><VThumb /></VTrack>
                <ScrollButton aria-label="向下"><Arrow d="down" /></ScrollButton>
              </VScroll>
            </SheetArea>
            <SheetTabs>
              <TabStrip>
                <Spacer />
                <NavButton aria-label="上一个"><Faint><Arrow d="left" /></Faint></NavButton>
                <NavButton aria-label="下一个"><Faint><Arrow d="right" /></Faint></NavButton>
                <SheetTab>双周考勤记录</SheetTab>
                <AddSheet aria-label="新工作表"><Icon w={9} h={9}><circle cx="4.500" cy="4.500" r="4" stroke="#777" strokeWidth=".8" /><path d="M4.500 2.200v4.600M2.200 4.500h4.600" stroke="#555" /></Icon></AddSheet>
                <Dots>⋮</Dots>
              </TabStrip>
              <HScroll>
                <ScrollButton $across aria-label="向左"><Arrow d="left" /></ScrollButton>
                <HThumb />
                <ScrollButton $across aria-label="向右"><Arrow d="right" /></ScrollButton>
              </HScroll>
            </SheetTabs>
            <StatusBar />
          </Window>
          <Callout $side="left">企业标志<Leader /></Callout>
          <Callout $side="right"><Leader />企业广告语</Callout>
        </Figure>
        <Notes>
          <Note>
            <Label>胸卡推荐材料：</Label>普通打印书纸<br />
            <Label>成品规格（单位：毫米）：</Label>视情况而定<br />
            <Label>印色：</Label>喷墨或激光打印
          </Note>
          <Note>
            <Strong>注意事项：</Strong>提取 EXCEL 模板，应该尽量使用提供的光盘资源文件，<br />
            避免在重绘中出现误差。
          </Note>
          <Note>
            <Strong>光盘文件：</Strong>光盘文件是本&nbsp; VI &nbsp;手册的电子文件集合，内含手册制作<br />
            的专用软件格式文件，制作打印相关物料请使用源文件。
          </Note>
        </Notes>
      </Page>
    </>
  );
}
